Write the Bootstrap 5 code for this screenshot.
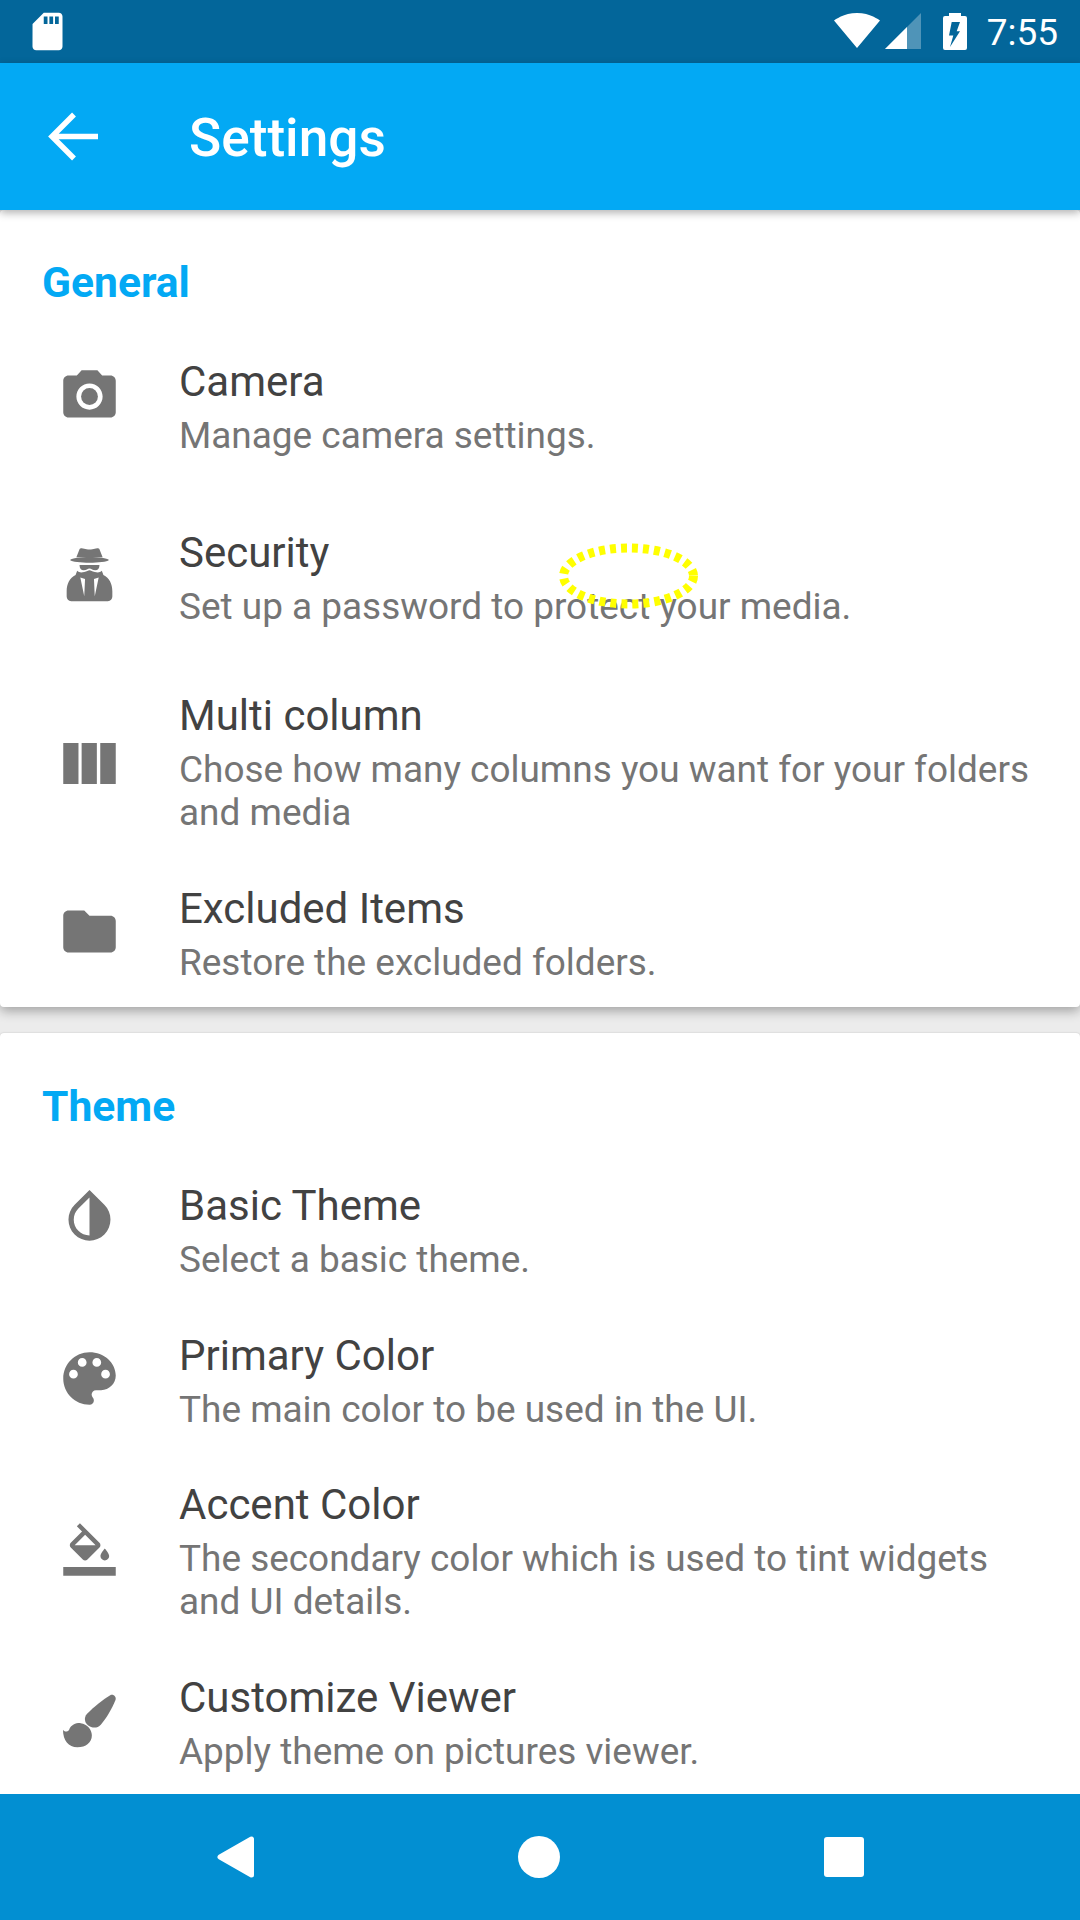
<!DOCTYPE html>
<html lang="en">
<head>
    <meta charset="UTF-8">
    <meta name="viewport" content="width=device-width, initial-scale=1.0">
    <title>Settings</title>
    <link href="https://cdn.jsdelivr.net/npm/bootstrap@5.3.0/dist/css/bootstrap.min.css" rel="stylesheet">
    <style>
        body { width: 1080px; height: 1920px; overflow: hidden; background: #ececec; font-family: Roboto, "Liberation Sans", sans-serif; }
        .screen { height: 1920px; }
        .status-bar { height: 63px; background: #03669a; padding: 0 22px 0 25px; color: #fff; }
        .status-time { font-size: 37px; line-height: 1; margin-left: 20px; margin-top: 2px; }
        .status-wifi { margin-bottom: 2px; }
        .status-cell { margin-left: 5px; margin-right: 22px; margin-bottom: 1px; }
        .tool-bar { height: 147px; background: #03a9f4; padding: 0 0 0 41px; box-shadow: 0 3px 8px rgba(0,0,0,.3); z-index: 2; }
        .tool-title { font-size: 53.2px; font-weight: 500; color: #fff; margin-left: 85px; margin-top: 5px; line-height: 1; }
        .pane { min-height: 0; overflow: hidden; }
        .sheet { background: #fff; border-radius: 4px; box-shadow: 0 4px 12px rgba(0,0,0,.32); flex-shrink: 0; position: relative; }
        .sheet + .sheet { margin-top: 26px; box-shadow: 0 0 2px rgba(0,0,0,.2); }
        .sheet-head { font-size: 42.6px; font-weight: 700; line-height: 44px; color: #03a9f4; padding: 50px 0 0 42px; margin-bottom: 30px; }
        .sheet + .sheet .sheet-head { padding-top: 51px; }
        .opt-row { padding: 26px 40px 26.7px 58px; gap: 58px; background: transparent; }
        .opt-icon { width: 63px; height: 63px; flex-shrink: 0; fill: #757575; margin-bottom: 8px; }
        .opt-name { font-size: 42px; line-height: 44px; color: #424242; margin-bottom: 10px; }
        .opt-note { font-size: 36.95px; line-height: 43px; color: #757575; }
        .gap-after-a { margin-bottom: 21.5px; }
        .gap-after-b { margin-bottom: 13px; }
        .last-row { padding-bottom: 23.4px; }
        .lift-a { margin-bottom: 24px; }
        .lift-b { margin-bottom: 33px; }
        .lift-none { margin-bottom: 0; }
        .nav-strip { height: 126px; background: #028fd2; padding: 0 216px 0 217px; z-index: 2; flex-shrink: 0; }
        .nav-round { width: 42px; height: 42px; background: #fff; border-radius: 50%; }
        .nav-box { width: 40px; height: 40px; background: #fff; border-radius: 3px; }
        .touch-mark { position: absolute; left: 550px; top: 536px; }
    </style>
</head>
<body>
    <div class="screen d-flex flex-column position-relative">
        <div class="status-bar d-flex align-items-center flex-shrink-0">
            <svg width="45" height="45" viewBox="0 0 24 24" fill="#fff"><path d="M18 2h-8L4.020 8 4 20c0 1.100.9 2 2 2h12c1.100 0 2-.9 2-2V4c0-1.100-.9-2-2-2zm-6 6h-2V4h2v4zm3 0h-2V4h2v4zm3 0h-2V4h2v4z"/></svg>
            <div class="ms-auto d-flex align-items-center">
                <svg class="status-wifi" width="46" height="35" viewBox="0.360 3 23.280 18.500" preserveAspectRatio="none" fill="#fff"><path d="M12.010 21.490L23.640 7c-.45-.34-4.930-4-11.640-4C5.280 3 .81 6.660.36 7l11.630 14.490.01.01.01-.01z"/></svg>
                <svg class="status-cell" width="36" height="36" viewBox="0 0 36 36" fill="#fff"><path opacity=".3" d="M0 36H36V0Z"/><path d="M0 36H22V14Z"/></svg>
                <svg width="24" height="37" viewBox="0 0 24 37" fill="#fff" fill-rule="evenodd"><path d="M6 3V0H18V3H22Q24 3 24 5V35Q24 37 22 37H2Q0 37 0 35V5Q0 3 2 3ZM8.700 9L6 22.600H10.300L7 34 17 18.300H13.700L17 9Z"/></svg>
                <span class="status-time">7:55</span>
            </div>
        </div>
        <div class="tool-bar d-flex align-items-center flex-shrink-0">
            <svg width="63" height="63" viewBox="0 0 63 63" fill="none" stroke="#fff" stroke-width="5.500"><path d="M57 31.500H11M33 9.500L11 31.500 33 53.500"/></svg>
            <span class="tool-title">Settings</span>
        </div>
        <div class="pane flex-grow-1 d-flex flex-column">
            <div class="sheet">
                <div class="sheet-head">General</div>
                <div class="list-group list-group-flush">
                    <div class="opt-row gap-after-a list-group-item border-0 d-flex align-items-center">
                        <svg class="opt-icon lift-a" viewBox="0 0 24 24"><circle cx="12" cy="12" r="3.200"/><path d="M9 2L7.170 4H4c-1.100 0-2 .9-2 2v12c0 1.100.9 2 2 2h16c1.100 0 2-.9 2-2V6c0-1.100-.9-2-2-2h-3.170L15 2H9zm3 15c-2.760 0-5-2.240-5-5s2.240-5 5-5 5 2.240 5 5-2.240 5-5 5z"/></svg>
                        <div>
                            <div class="opt-name">Camera</div>
                            <div class="opt-note">Manage camera settings.</div>
                        </div>
                    </div>
                    <div class="opt-row gap-after-b list-group-item border-0 d-flex align-items-center">
                        <svg class="opt-icon" viewBox="0 0 24 24">
                            <path d="M7 5L8.200 2C8.400 1.500 9.300 1.500 10 1.800 11 2.200 13 2.200 14 1.800 14.700 1.500 15.600 1.500 15.800 2L17 5Z"/>
                            <path d="M4.600 6.100C6 4.600 18 4.600 19.400 6.100 18 7.500 6 7.500 4.600 6.100Z"/>
                            <path d="M8.200 8H15.800C15.800 9.300 15.200 10 14.200 10 13.200 10 12.700 9.300 12 9.300 11.300 9.300 10.800 10 9.800 10 8.800 10 8.200 9.300 8.200 8Z"/>
                            <path d="M7.300 10.200C8 11 9 10.900 10 10.700 11 10.500 11.500 10 12 10 12.500 10 13 10.500 14 10.700 15 10.900 16 11 16.700 10.200L17.300 11.800C19.600 13 20.700 15.200 20.700 18V20C20.700 21 20 21.800 19 21.800H5C4 21.800 3.300 21 3.300 20V18C3.300 15.200 4.400 13 6.700 11.800Z"/>
                            <path fill="#fff" d="M8.500 12.800L10.300 13.300 10 19.900ZM15.500 12.800L13.700 13.300 14 19.900Z"/>
                        </svg>
                        <div>
                            <div class="opt-name">Security</div>
                            <div class="opt-note">Set up a password to protect your media.</div>
                        </div>
                    </div>
                    <div class="opt-row list-group-item border-0 d-flex align-items-center">
                        <svg class="opt-icon lift-none" viewBox="0 0 24 24"><path d="M2 4.200H7.800V19.800H2ZM9 4.200H14.800V19.800H9ZM16.100 4.200H22V19.800H16.100Z"/></svg>
                        <div>
                            <div class="opt-name">Multi column</div>
                            <div class="opt-note">Chose how many columns you want for your folders and media</div>
                        </div>
                    </div>
                    <div class="opt-row last-row list-group-item border-0 d-flex align-items-center">
                        <svg class="opt-icon" viewBox="0 0 24 24"><path d="M10 4H4c-1.100 0-2 .9-2 2v12c0 1.100.9 2 2 2h16c1.100 0 2-.9 2-2V8c0-1.100-.9-2-2-2h-8l-2-2z"/></svg>
                        <div>
                            <div class="opt-name">Excluded Items</div>
                            <div class="opt-note">Restore the excluded folders.</div>
                        </div>
                    </div>
                </div>
            </div>
            <div class="sheet">
                <div class="sheet-head">Theme</div>
                <div class="list-group list-group-flush">
                    <div class="opt-row list-group-item border-0 d-flex align-items-center">
                        <svg class="opt-icon lift-b" viewBox="0 0 24 24"><path d="M17.660 7.930L12 2.270 6.340 7.930c-3.120 3.120-3.120 8.190 0 11.310C7.900 20.800 9.950 21.580 12 21.580c2.050 0 4.100-.78 5.660-2.340 3.120-3.120 3.120-8.190 0-11.310zM12 19.590c-1.600 0-3.110-.62-4.240-1.760C6.620 16.690 6 15.190 6 13.590s.62-3.110 1.760-4.240L12 5.100v14.490z"/></svg>
                        <div>
                            <div class="opt-name">Basic Theme</div>
                            <div class="opt-note">Select a basic theme.</div>
                        </div>
                    </div>
                    <div class="opt-row list-group-item border-0 d-flex align-items-center">
                        <svg class="opt-icon" viewBox="1.200 1.200 21.600 21.600"><path d="M12 3c-4.970 0-9 4.030-9 9s4.030 9 9 9c.83 0 1.500-.67 1.500-1.500 0-.39-.15-.74-.39-1.010-.23-.26-.38-.61-.38-.99 0-.83.67-1.500 1.500-1.500H16c2.760 0 5-2.240 5-5 0-4.420-4.030-8-9-8zm-5.500 9c-.83 0-1.500-.67-1.500-1.500S5.670 9 6.500 9 8 9.670 8 10.500 7.330 12 6.500 12zm3-4C8.670 8 8 7.330 8 6.500S8.670 5 9.500 5s1.500.67 1.500 1.500S10.330 8 9.500 8zm5 0c-.83 0-1.500-.67-1.500-1.500S13.670 5 14.500 5s1.500.67 1.500 1.500S15.330 8 14.500 8zm3 4c-.83 0-1.500-.67-1.500-1.500S16.670 9 17.500 9s1.500.67 1.500 1.500-.67 1.500-1.500 1.500z"/></svg>
                        <div>
                            <div class="opt-name">Primary Color</div>
                            <div class="opt-note">The main color to be used in the UI.</div>
                        </div>
                    </div>
                    <div class="opt-row list-group-item border-0 d-flex align-items-center">
                        <svg class="opt-icon" viewBox="-2.400 -2.400 28.800 28.800"><path d="M16.560 8.940L7.620 0 6.210 1.410l2.380 2.380-5.150 5.150c-.59.59-.59 1.540 0 2.120l5.500 5.500c.29.29.68.44 1.060.44s.77-.15 1.060-.44l5.500-5.500c.59-.58.59-1.530 0-2.110zM5.210 10L10 5.210 14.790 10H5.210zM19 11.500s-2 2.170-2 3.500c0 1.100.9 2 2 2s2-.9 2-2c0-1.330-2-3.500-2-3.500z"/><path d="M0 20h24v4H0z"/></svg>
                        <div>
                            <div class="opt-name">Accent Color</div>
                            <div class="opt-note">The secondary color which is used to tint widgets and UI details.</div>
                        </div>
                    </div>
                    <div class="opt-row list-group-item border-0 d-flex align-items-center">
                        <svg class="opt-icon" viewBox="0 0 24 24"><path d="M20.200 2.200C21.300 1.900 22.300 3 21.900 4.200 20.600 7.500 18.500 11 16.300 13.600 15 15 13 15 11.400 13.800 10 12.600 9.900 10.700 11 9.500 13.800 6.800 17 4 20.200 2.200Z"/><path d="M1.900 15.500C2.400 16.400 3.500 16.400 4.200 15.600 5 13.500 7 12.900 8.600 13 11.200 13.400 12.900 15.500 12.900 17.600 12.900 20.400 10.600 22.200 7.400 22.200 4 22.200 1.900 19.500 1.900 15.500Z"/></svg>
                        <div>
                            <div class="opt-name">Customize Viewer</div>
                            <div class="opt-note">Apply theme on pictures viewer.</div>
                        </div>
                    </div>
                </div>
            </div>
        </div>
        <div class="nav-strip d-flex align-items-center justify-content-between">
            <svg width="37" height="42" viewBox="0 0 37 42" fill="#fff" stroke="#fff" stroke-width="5" stroke-linejoin="round"><path d="M34.500 3V39L3 21Z"/></svg>
            <div class="nav-round"></div>
            <div class="nav-box"></div>
        </div>
        <svg class="touch-mark" width="157" height="80" viewBox="0 0 157 80" fill="none" stroke="#ffff00" stroke-width="9" stroke-dasharray="6 5"><ellipse cx="78.500" cy="40" rx="65" ry="28"/></svg>
    </div>
    <script src="https://cdn.jsdelivr.net/npm/bootstrap@5.3.0/dist/js/bootstrap.bundle.min.js"></script>
</body>
</html>
